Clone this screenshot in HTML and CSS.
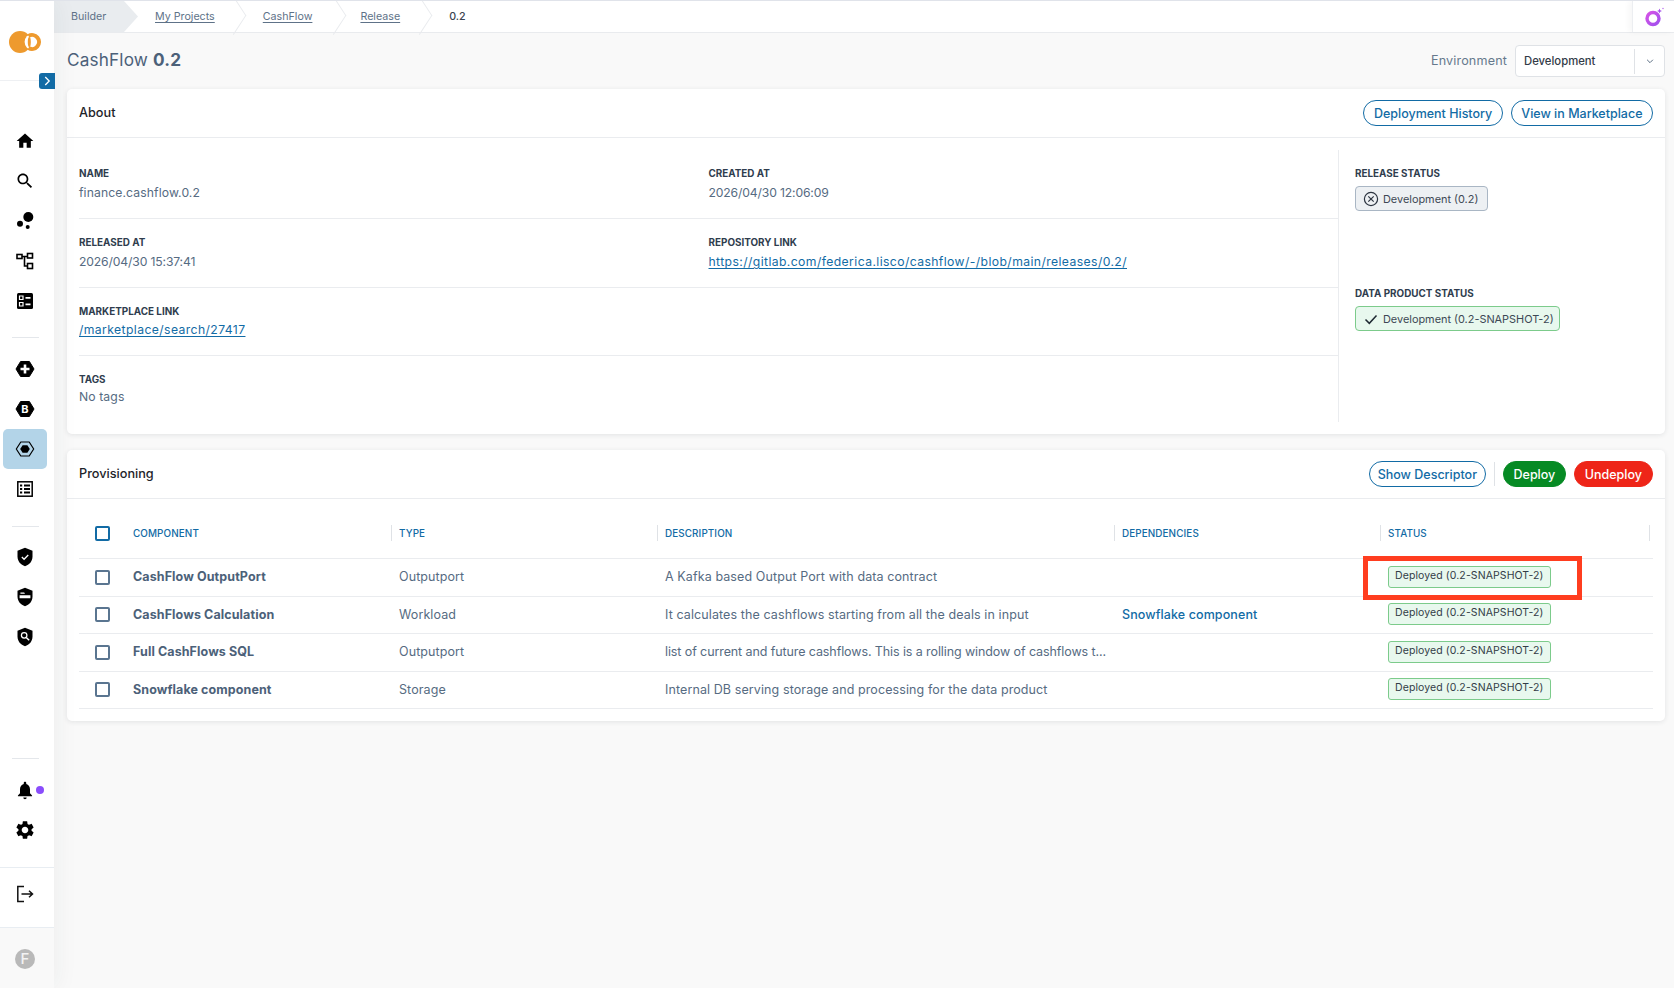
FILE: index.html
```html
<!DOCTYPE html>
<html lang="en">
<head>
<meta charset="utf-8">
<title>CashFlow 0.2</title>
<link rel="stylesheet" href="styles.css">
</head>
<body>
<div class="app">
  <aside class="sidebar">
    <div class="logo-block">
      <svg class="logo" viewBox="0 0 32 22" width="32" height="22">
        <circle cx="11" cy="11" r="11" fill="#ee9a2e"/>
        <circle cx="23.600" cy="11" r="8" fill="#fff"/>
        <path d="M19.500 4.940A7 7 0 1 1 19.500 17.060" fill="none" stroke="#ee9a2e" stroke-width="4"/>
        <ellipse cx="20.300" cy="11" rx="1.500" ry="5" fill="#ee9a2e"/>
      </svg>
      <button class="toggle"><svg viewBox="0 0 16 16" width="14" height="14"><path d="M6 3.500 10.500 8 6 12.500" fill="none" stroke="#fff" stroke-width="1.500"/></svg></button>
    </div>
    <nav class="nav">
      <a class="nav-item"><svg viewBox="0 0 24 24" width="20" height="20"><path d="M10 20v-6h4v6h5v-8h3L12 3 2 12h3v8z"/></svg></a>
      <a class="nav-item"><svg viewBox="0 0 24 24" width="20" height="20"><path d="M15.500 14h-.79l-.28-.27C15.410 12.590 16 11.110 16 9.500 16 5.910 13.090 3 9.500 3S3 5.910 3 9.500 5.910 16 9.500 16c1.610 0 3.090-.59 4.230-1.570l.27.28v.79l5 4.990L20.490 19l-4.990-5zm-6 0C7.010 14 5 11.990 5 9.500S7.010 5 9.500 5 14 7.010 14 9.500 11.990 14 9.500 14z"/></svg></a>
      <a class="nav-item"><svg viewBox="0 0 20 20" width="20" height="20"><circle cx="13.300" cy="6" r="5"/><circle cx="5" cy="12.700" r="3"/><circle cx="12.700" cy="16" r="2"/></svg></a>
      <a class="nav-item"><svg viewBox="0 0 20 20" width="20" height="20" fill="none" stroke="#000" stroke-width="1.600"><rect x="2" y="3.500" width="5" height="4"/><rect x="12.500" y="2.500" width="5" height="4.500"/><rect x="12.500" y="12.500" width="5" height="5"/><path d="M7 5.500h5.500M9.500 5.500v9.500h3"/></svg></a>
      <a class="nav-item"><svg viewBox="0 0 20 20" width="20" height="20"><rect x="2" y="2" width="16" height="16" rx="1.500"/><path d="M4.500 5h3.500v3.500h-3.500zM4.500 11.500h3.500v3.500h-3.500z" fill="none" stroke="#fff" stroke-width="1.200"/><path d="M10.500 6h5v1.800h-5zM10.500 12.500h5v1.800h-5z" fill="#fff"/></svg></a>
      <hr class="nav-rule rule-top">
      <a class="nav-item"><svg viewBox="0 0 20 20" width="20" height="20"><path d="M5.600 2.500h8.800L19 10l-4.600 7.500H5.600L1 10z" stroke="#000" stroke-linejoin="round"/><path d="M8.700 5.500h2.600v3.200h3.200v2.600h-3.200v3.200H8.700v-3.200H5.500V8.700h3.200z" fill="#fff"/></svg></a>
      <a class="nav-item"><svg viewBox="0 0 20 20" width="20" height="20"><path d="M5.600 2.500h8.800L19 10l-4.600 7.500H5.600L1 10z" stroke="#000" stroke-linejoin="round"/><text x="10" y="14.300" class="hex-letter">B</text></svg></a>
      <a class="nav-item active"><svg viewBox="0 0 20 20" width="20" height="20"><path d="M5.800 3h8.400L18.700 10l-4.500 7H5.800L1.300 10z" fill="none" stroke="#000" stroke-width="1.200" stroke-linejoin="round"/><path d="M7.600 6.200h4.800L14.800 10l-2.400 3.800H7.600L5.200 10z"/></svg></a>
      <a class="nav-item"><svg viewBox="0 0 20 20" width="20" height="20"><rect x="2.800" y="2.800" width="14.400" height="14.400" fill="none" stroke="#000" stroke-width="1.500"/><path d="M5 5.500h2.200v2H5zM9 5.500h6v2H9zM5 9h2.200v2H5zM9 9h6v2H9zM5 12.500h2.200v2H5zM9 12.500h6v2H9z"/></svg></a>
      <hr class="nav-rule rule-mid">
      <a class="nav-item"><svg viewBox="0 0 24 24" width="20" height="20"><path d="M12 1 3 4.500v7c0 5.550 3.840 10.240 9 11.500 5.160-1.260 9-5.950 9-11.500v-7z"/><path d="m8.200 12 2.700 2.700 5-5" fill="none" stroke="#fff" stroke-width="1.600"/></svg></a>
      <a class="nav-item"><svg viewBox="0 0 24 24" width="20" height="20"><path d="M12 1 3 4.500v7c0 5.550 3.840 10.240 9 11.500 5.160-1.260 9-5.950 9-11.500v-7z"/><path d="M6.500 6.500h4.500l1 1.500H6.500zM5.500 10h13v3.500h-13z" fill="#fff"/></svg></a>
      <a class="nav-item"><svg viewBox="0 0 24 24" width="20" height="20"><path d="M12 1 3 4.500v7c0 5.550 3.840 10.240 9 11.500 5.160-1.260 9-5.950 9-11.500v-7z"/><circle cx="11" cy="10" r="3.300" fill="none" stroke="#fff" stroke-width="1.500"/><path d="m13.500 12.500 3.500 3.500" stroke="#fff" stroke-width="1.800"/></svg></a>
    </nav>
    <div class="nav-bottom">
      <hr class="nav-rule rule-bottom">
      <a class="nav-item bell"><svg viewBox="0 0 24 24" width="20" height="20"><path d="M12 23c1.100 0 2-.9 2-2h-4c0 1.100.89 2 2 2zm6-7v-5c0-3.070-1.640-5.640-4.500-6.320V3.500c0-.83-.67-1.500-1.500-1.500s-1.500.67-1.500 1.500v1.180C7.630 5.360 6 7.920 6 11v5l-2.500 2.500v1h17v-1z"/></svg><span class="dot"></span></a>
      <a class="nav-item"><svg viewBox="0 0 24 24" width="22" height="22"><path d="M19.140 12.940c.04-.3.06-.61.06-.94 0-.32-.02-.64-.07-.94l2.030-1.580c.18-.14.23-.41.12-.61l-1.920-3.320c-.12-.22-.37-.29-.59-.22l-2.390.96c-.5-.38-1.030-.7-1.620-.94l-.36-2.540c-.04-.24-.24-.41-.48-.41h-3.840c-.24 0-.43.17-.47.41l-.36 2.540c-.59.24-1.130.57-1.620.94l-2.390-.96c-.22-.08-.47 0-.59.22L2.740 8.870c-.12.21-.08.47.12.61l2.030 1.580c-.05.3-.09.63-.09.94s.02.64.07.94l-2.030 1.580c-.18.14-.23.41-.12.61l1.920 3.320c.12.22.37.29.59.22l2.390-.96c.5.38 1.030.7 1.620.94l.36 2.540c.05.24.24.41.48.41h3.840c.24 0 .44-.17.47-.41l.36-2.540c.59-.24 1.130-.56 1.620-.94l2.390.96c.22.08.47 0 .59-.22l1.920-3.320c.12-.22.07-.47-.12-.61l-2.010-1.580zM12 15.600c-1.980 0-3.600-1.620-3.600-3.600s1.620-3.600 3.600-3.600 3.600 1.620 3.600 3.600-1.620 3.600-3.600 3.600z"/></svg></a>
      <div class="logout"><svg viewBox="0 0 20 20" width="20" height="20" fill="none" stroke="#111" stroke-width="1.500"><path d="M9 2.500H2.800v15H9"/><path d="M6.500 10h11M14 6.800l3.500 3.200-3.500 3.200"/></svg></div>
      <div class="avatar-block"><span class="avatar">F</span></div>
    </div>
  </aside>

  <main class="main">
    <header class="crumbs">
      <span class="crumb crumb-root">Builder</span>
      <a class="crumb crumb-link c1">My Projects</a>
      <a class="crumb crumb-link c2">CashFlow</a>
      <a class="crumb crumb-link c3">Release</a>
      <span class="crumb crumb-last">0.2</span>
      <span class="ai-btn"><svg viewBox="0 0 22 22" width="22" height="22"><defs><linearGradient id="ai" x1="0" y1="0" x2="1" y2="1"><stop offset="0" stop-color="#d653e6"/><stop offset="1" stop-color="#a04fee"/></linearGradient></defs><circle cx="10" cy="12.500" r="6" fill="none" stroke="url(#ai)" stroke-width="3.400"/><path d="M16.500 2.500l.7 1.800 1.800.7-1.800.7-.7 1.800-.7-1.800-1.800-.7 1.800-.7z" fill="#a44fe8"/><circle cx="20" cy="2.500" r=".8" fill="#c07cf0"/></svg></span>
    </header>

    <div class="content">
      <div class="page-head">
        <h1 class="page-title">CashFlow <b>0.2</b></h1>
        <div class="env">
          <span class="env-label">Environment</span>
          <div class="select"><span class="select-value">Development</span><span class="select-arrow"><svg viewBox="0 0 12 12" width="10" height="10"><path d="M2.500 4.500 6 8l3.500-3.500" fill="none" stroke="#5d7085" stroke-width="1.200"/></svg></span></div>
        </div>
      </div>

      <section class="card about">
        <div class="card-head">
          <h2 class="card-title">About</h2>
          <div class="actions">
            <button class="btn btn-outline">Deployment History</button>
            <button class="btn btn-outline">View in Marketplace</button>
          </div>
        </div>
        <div class="about-body">
          <div class="fields">
            <div class="field-row">
              <div class="field"><div class="label">NAME</div><div class="value">finance.cashflow.0.2</div></div>
              <div class="field"><div class="label">CREATED AT</div><div class="value value-date">2026/04/30 12:06:09</div></div>
            </div>
            <div class="field-row">
              <div class="field"><div class="label">RELEASED AT</div><div class="value value-date">2026/04/30 15:37:41</div></div>
              <div class="field"><div class="label">REPOSITORY LINK</div><div class="value"><a class="link">https://gitlab.com/federica.lisco/cashflow/-/blob/main/releases/0.2/</a></div></div>
            </div>
            <div class="field-row">
              <div class="field"><div class="label">MARKETPLACE LINK</div><div class="value value-link"><a class="link">/marketplace/search/27417</a></div></div>
            </div>
            <div class="field-row last">
              <div class="field"><div class="label">TAGS</div><div class="value value-tight">No tags</div></div>
            </div>
          </div>
          <div class="statuses">
            <div class="status-block">
              <div class="label">RELEASE STATUS</div>
              <span class="chip chip-grey"><svg viewBox="0 0 16 16" width="16" height="16" fill="none" stroke="#2c3440" stroke-width="1.200"><circle cx="8" cy="8" r="6.600"/><path d="m5.300 5.300 5.400 5.400m0-5.400-5.400 5.400"/></svg>Development (0.2)</span>
            </div>
            <div class="status-block">
              <div class="label">DATA PRODUCT STATUS</div>
              <span class="chip chip-green"><svg viewBox="0 0 16 16" width="16" height="16" fill="none" stroke="#1f2a33" stroke-width="1.500"><path d="m2.500 8.500 3.800 3.800 7.200-7.800"/></svg>Development (0.2-SNAPSHOT-2)</span>
            </div>
          </div>
        </div>
      </section>

      <section class="card provisioning">
        <div class="card-head">
          <h2 class="card-title">Provisioning</h2>
          <div class="actions">
            <button class="btn btn-outline btn-desc">Show Descriptor</button>
            <span class="actions-rule"></span>
            <button class="btn btn-green">Deploy</button>
            <button class="btn btn-red">Undeploy</button>
          </div>
        </div>
        <div class="table">
          <div class="tr thead">
            <div class="td check"><span class="checkbox checkbox-head"></span></div>
            <div class="td th">COMPONENT</div>
            <div class="td th ruled">TYPE</div>
            <div class="td th ruled">DESCRIPTION</div>
            <div class="td th ruled">DEPENDENCIES</div>
            <div class="td th ruled ruled-end">STATUS</div>
          </div>
          <div class="tr">
            <div class="td check"><span class="checkbox"></span></div>
            <div class="td name">CashFlow OutputPort</div>
            <div class="td">Outputport</div>
            <div class="td">A Kafka based Output Port with data contract</div>
            <div class="td"></div>
            <div class="td"><span class="badge">Deployed (0.2-SNAPSHOT-2)</span></div>
          </div>
          <div class="tr">
            <div class="td check"><span class="checkbox"></span></div>
            <div class="td name">CashFlows Calculation</div>
            <div class="td">Workload</div>
            <div class="td">It calculates the cashflows starting from all the deals in input</div>
            <div class="td dep">Snowflake component</div>
            <div class="td"><span class="badge">Deployed (0.2-SNAPSHOT-2)</span></div>
          </div>
          <div class="tr">
            <div class="td check"><span class="checkbox"></span></div>
            <div class="td name">Full CashFlows SQL</div>
            <div class="td">Outputport</div>
            <div class="td desc-long">list of current and future cashflows. This is a rolling window of cashflows t...</div>
            <div class="td"></div>
            <div class="td"><span class="badge">Deployed (0.2-SNAPSHOT-2)</span></div>
          </div>
          <div class="tr">
            <div class="td check"><span class="checkbox"></span></div>
            <div class="td name">Snowflake component</div>
            <div class="td">Storage</div>
            <div class="td">Internal DB serving storage and processing for the data product</div>
            <div class="td"></div>
            <div class="td"><span class="badge">Deployed (0.2-SNAPSHOT-2)</span></div>
          </div>
        </div>
      </section>
    </div>
  </main>
</div>
<div class="annotation"></div>
</body>
</html>
```
FILE: styles.css
```css
* { box-sizing: border-box; }
html, body { margin: 0; padding: 0; height: 988px; overflow: hidden; }
body {
  font-family: Inter, "Liberation Sans", sans-serif;
  font-size: 13px;
  color: #4c6179;
  background: #f9f9f9;
  border-top: 1px solid #e0e3ea;
  position: relative;
}
h1, h2 { margin: 0; font-weight: 400; }
a { cursor: pointer; }
.app { display: flex; height: 987px; }

/* Sidebar */
.sidebar {
  width: 54px;
  flex: none;
  display: flex;
  flex-direction: column;
  background: #fff;
  position: relative;
  z-index: 2;
  box-shadow: 4px 0 22px rgba(40, 50, 60, .05);
}
.logo-block {
  height: 80px;
  padding-top: 30px;
  padding-left: 9px;
  border-bottom: 1px solid #eef0f3;
  position: relative;
  flex: none;
}
.logo { display: block; }
.toggle {
  position: absolute;
  left: 39px;
  top: 72px;
  width: 16px;
  height: 16px;
  padding: 0;
  border: 0;
  border-radius: 3px 0 0 3px;
  background: #126ba5;
  display: flex;
  align-items: center;
  justify-content: center;
}
.nav { padding: 40px 7px 0 3px; flex: 1; display: flex; flex-direction: column; align-items: center; }
.nav-item {
  width: 44px;
  height: 40px;
  flex: none;
  display: flex;
  align-items: center;
  justify-content: center;
  border-radius: 5px;
  position: relative;
}
.nav-item.active { background: #b3d4e8; }
.nav-rule { width: 27px; height: 1px; border: 0; margin: 0; background: #e4e7eb; flex: none; }
.rule-top { margin-top: 16px; margin-bottom: 11px; }
.rule-mid { margin-top: 17px; margin-bottom: 10px; }
.hex-letter { font: 700 11px Inter, sans-serif; fill: #fff; text-anchor: middle; }
.nav-bottom { display: flex; flex-direction: column; align-items: center; flex: none; padding-top: 0; }
.nav-bottom > .nav-rule, .nav-bottom > .nav-item { margin-right: 4px; }
.rule-bottom { margin-bottom: 11px; }
.dot {
  position: absolute;
  left: 33px;
  top: 16px;
  width: 8px;
  height: 8px;
  border-radius: 50%;
  background: #8a4dfc;
}
.logout {
  margin-top: 17px;
  width: 100%;
  height: 61px;
  border-top: 1px solid #e8edf2;
  border-bottom: 1px solid #e8edf2;
  display: flex;
  align-items: center;
  justify-content: center;
  padding: 0 4px 8px 0;
}
.avatar-block {
  width: 100%;
  height: 60px;
  background: #f9f9f9;
  display: flex;
  align-items: center;
  justify-content: center;
  padding: 1px 4px 0 0;
}
.avatar {
  width: 20px;
  height: 20px;
  border-radius: 50%;
  background: #b9b9b9;
  color: #f3f3f3;
  font-size: 15px;
  font-weight: 500;
  display: flex;
  align-items: center;
  justify-content: center;
}

/* Main */
.main { flex: 1; min-width: 0; display: flex; flex-direction: column; }
.crumbs {
  height: 32px;
  flex: none;
  background: #fff;
  border-bottom: 1px solid #e9ebee;
  display: flex;
  align-items: center;
  position: relative;
  font-size: 10.700px;
}
.crumb { display: block; white-space: nowrap; }
.crumb-root {
  width: 84px;
  height: 31px;
  line-height: 31px;
  padding-left: 17px;
  color: #5e7288;
  background: #e9ecef;
  clip-path: polygon(0 0, 70px 0, 84px 50%, 70px 100%, 0 100%);
}
.crumb-link {
  position: relative;
  color: #5e7288;
  text-decoration: underline;
  text-underline-offset: 2px;
}
.crumb-link::after {
  content: "";
  position: absolute;
  top: -6px;
  width: 22px;
  height: 22px;
  border-top: 1px solid #e9ebee;
  border-right: 1px solid #e9ebee;
  transform: rotate(45deg) skew(12deg, 12deg);
}
.c1 { margin-left: 17px; }
.c1::after { left: 67px; }
.c2 { margin-left: 48px; }
.c2::after { left: 59px; }
.c3 { margin-left: 48px; }
.c3::after { left: 48px; }
.crumb-last { margin-left: 49px; color: #3a4350; font-weight: 500; }
.ai-btn {
  position: absolute;
  right: 0;
  top: 0;
  width: 42px;
  height: 31px;
  background: #fff;
  border-left: 1px solid #eceef1;
  box-shadow: -3px 0 6px rgba(0, 0, 0, .04);
  display: flex;
  align-items: center;
  justify-content: center;
}
.content { padding: 0 9px 0 13px; flex: 1; }
.page-head { height: 56px; display: flex; align-items: center; justify-content: space-between; }
.page-title { font-size: 17.200px; color: #4c6179; letter-spacing: .15px; margin-bottom: 3px; }
.page-title b { font-weight: 700; }
.env { display: flex; align-items: center; gap: 8px; }
.env-label { font-size: 12.600px; color: #66798d; letter-spacing: .15px; margin-bottom: 1px; }
.select {
  width: 150px;
  height: 32px;
  background: #fff;
  border: 1px solid #dfe2e6;
  border-radius: 4px;
  display: flex;
  align-items: center;
  padding-left: 8px;
  position: relative;
}
.select-value { flex: 1; font-size: 11.300px; font-weight: 500; color: #323b47; }
.select-arrow {
  width: 30px;
  height: 25px;
  border-left: 1px solid #dfe2e6;
  display: flex;
  align-items: center;
  justify-content: center;
}

/* Cards */
.card {
  background: #fff;
  border-radius: 5px;
  box-shadow: 0 1px 5px rgba(30, 40, 50, .1);
}
.about { height: 345px; margin-bottom: 16px; }
.provisioning { height: 271px; }
.card-head {
  height: 49px;
  padding: 0 12px;
  border-bottom: 1px solid #eaecef;
  display: flex;
  align-items: center;
  justify-content: space-between;
}
.card-title { font-size: 12.700px; font-weight: 500; color: #1e2329; margin-bottom: 1px; }
.actions { display: flex; align-items: center; gap: 8px; }
.actions-rule { width: 1px; height: 24px; background: #dfe2e6; }
.btn {
  height: 26px;
  padding: 0 9.500px;
  border-radius: 13px;
  font-family: inherit;
  font-size: 12.500px;
  font-weight: 500;
  background: #fff;
  border: 1px solid #126ba5;
  color: #126ba5;
}
.btn-desc { padding: 0 8px; }
.btn-green { background: #068a24; border-color: #068a24; color: #fff; padding: 0 9.500px; }
.btn-red { background: #ee2518; border-color: #ee2518; color: #fff; padding: 0 10px; }
.about-body { display: flex; height: 272px; margin-top: 12px; padding-left: 12px; }
.fields { width: 1259px; flex: none; display: flex; flex-direction: column; }
.field-row {
  display: grid;
  grid-template-columns: 1fr 1fr;
  height: 69px;
  padding-top: 17px;
  border-bottom: 1px solid #eaecef;
  flex: none;
}
.field-row:nth-child(3) { height: 68px; }
.field-row.last { border-bottom: 0; }
.label { font-size: 9.900px; line-height: 14px; font-weight: 700; color: #2f3d4e; margin-top: -1px; }
.value { font-size: 12.200px; line-height: 22px; margin-top: 2px; color: #566b82; letter-spacing: .1px; }
.value-date { letter-spacing: -.15px; }
.value-link { margin-top: 1px; }
.value-tight { margin-top: 0; }
.link { color: #126ba5; text-decoration: underline; text-underline-offset: 2px; letter-spacing: .4px; }
.statuses { border-left: 1px solid #eaecef; padding: 17px 0 0 16px; flex: 1; }
.status-block { height: 120px; display: flex; flex-direction: column; align-items: flex-start; gap: 6px; }
.chip {
  height: 25px;
  display: inline-flex;
  align-items: center;
  gap: 4px;
  border-radius: 4px;
  border: 1px solid;
  font-size: 10.900px;
  color: #3d4855;
}
.chip-grey { background: #edf0f3; border-color: #a9b6c4; padding: 0 9px 0 7px; }
.chip-green { background: #e8f8ee; border-color: #7ccb8b; padding: 0 5px 0 7px; }

/* Table */
.table { margin: 9px 12px 0; }
.tr {
  display: grid;
  grid-template-columns: 46px 266px 266px 457px 266px 1fr;
  height: 37.500px;
  border-bottom: 1px solid #eaecef;
  align-items: center;
}
.tr.thead { height: 51px; }
.td { padding: 0 8px 1px; font-size: 12.500px; white-space: nowrap; color: #566b82; min-width: 0; letter-spacing: .1px; }
.td.check { padding: 0 0 0 16px; display: flex; align-items: center; }
.checkbox {
  width: 15px;
  height: 15px;
  display: block;
  border: 2px solid #5a7590;
  border-radius: 2px;
  background: #fff;
}
.checkbox-head { border-color: #126ba5; }
.th { font-size: 9.900px; font-weight: 500; color: #126ba5; letter-spacing: .1px; position: relative; line-height: 16px; padding-bottom: 0; }
.ruled::before {
  content: "";
  position: absolute;
  left: 0;
  top: 0;
  width: 1px;
  height: 16px;
  background: #dfe2e6;
}
.ruled-end::after {
  content: "";
  position: absolute;
  right: 3px;
  top: 0;
  width: 1px;
  height: 16px;
  background: #dfe2e6;
}
.name { font-weight: 700; color: #4c6179; }
.dep { color: #126ba5; font-weight: 500; }
.desc-long { letter-spacing: -.1px; }
.badge {
  display: inline-block;
  width: 163px;
  height: 22px;
  line-height: 18px;
  padding-left: 6px;
  background: #e8f8ee;
  border: 1px solid #7ccb8b;
  border-radius: 3px;
  font-size: 10.500px;
  color: #333d47;
  vertical-align: middle;
}
.annotation {
  position: absolute;
  left: 1363px;
  top: 555px;
  width: 219px;
  height: 44px;
  border: 5px solid #ff3d1f;
  z-index: 5;
  pointer-events: none;
}
```
